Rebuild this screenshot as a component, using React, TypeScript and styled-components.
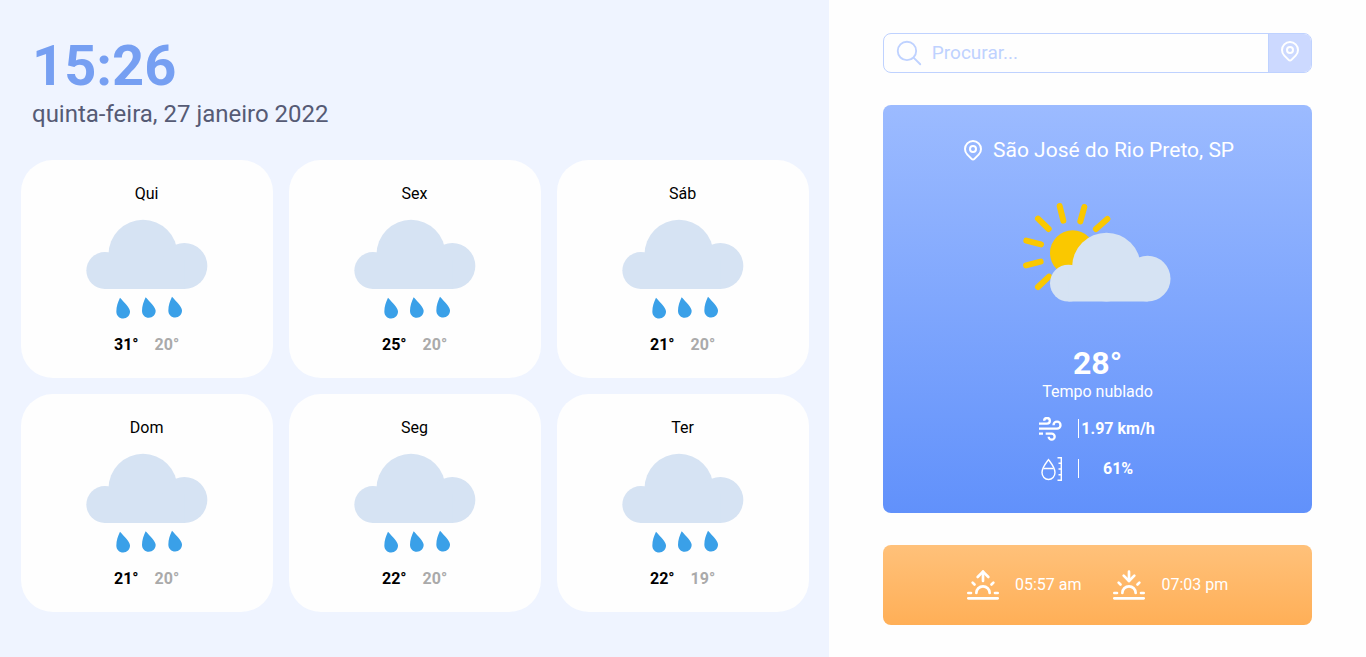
import React from "react";
import styled, { createGlobalStyle } from "styled-components";
import { HiOutlineLocationMarker } from "react-icons/hi";
import { IoSearchOutline } from "react-icons/io5";
import { FiSunrise, FiSunset } from "react-icons/fi";

const GlobalStyle = createGlobalStyle`
  * {
    box-sizing: border-box;
    margin: 0;
    padding: 0;
  }

  body {
    background: #fefefe;
    color: #000;
    font-family: Roboto, sans-serif;
    font-size: 16px;
    line-height: 19px;
  }
`;

const Page = styled.div`
  display: grid;
  grid-template-columns: 607fr 393fr;
  min-height: 100vh;
`;

const Forecast = styled.main`
  display: flex;
  flex-direction: column;
  gap: 32px;
  padding: 32px 16px;
  background: #eff4ff;
`;

const Header = styled.header`
  padding: 0 16px;
`;

const Clock = styled.h1`
  color: #769ff2;
  font-size: 56px;
  font-weight: 700;
  line-height: 68px;
`;

const Today = styled.p`
  color: #565b75;
  font-size: 24px;
  line-height: 28px;
`;

const Days = styled.ul`
  display: grid;
  grid-template-columns: repeat(3, minmax(0, 252px));
  gap: 16px;
  justify-content: center;
  list-style: none;
`;

const DayCard = styled.li`
  display: flex;
  flex-direction: column;
  align-items: center;
  padding: 24px;
  border-radius: 32px;
  background: #fefefe;
`;

const DayName = styled.h2`
  font-size: 16px;
  font-weight: 400;
`;

const Range = styled.div`
  display: flex;
  gap: 16px;
  font-weight: 700;
`;

const Degrees = styled.span<{ $low?: boolean }>`
  color: ${({ $low }) => ($low ? "#aaaaaa" : "#000")};
`;

const Sidebar = styled.aside`
  display: flex;
  flex-direction: column;
  justify-content: center;
  gap: 32px;
  padding: 32px 10%;
  background: #fefefe;
`;

const SearchBar = styled.form`
  display: flex;
  height: 40px;
  overflow: hidden;
  border: 1px solid #bfd2ff;
  border-radius: 8px;
`;

const SearchField = styled.label`
  display: flex;
  flex: 1;
  align-items: center;
  gap: 8px;
  min-width: 0;
  padding-left: 10px;
  color: #bfd2ff;
`;

const SearchInput = styled.input`
  flex: 1;
  min-width: 0;
  height: 36px;
  border: 0;
  outline: 0;
  background: transparent;
  color: #769ff2;
  font: 400 19px Roboto, sans-serif;

  &::placeholder {
    color: #bfd2ff;
    opacity: 1;
  }
`;

const LocateButton = styled.button`
  display: flex;
  align-items: center;
  justify-content: center;
  width: 43px;
  padding-bottom: 4px;
  border: 0;
  border-left: 1px solid #bfd2ff;
  background: #ccd9ff;
  color: #fff;
  cursor: pointer;
`;

const CurrentCard = styled.section`
  display: flex;
  flex-direction: column;
  align-items: center;
  padding: 32px;
  border-radius: 8px;
  background: linear-gradient(180deg, #9cbbff 0%, #6191fb 100%);
  color: #fff;
`;

const City = styled.h2`
  display: flex;
  align-items: center;
  gap: 8px;
  font-size: 21px;
  font-weight: 400;
  line-height: 26px;
`;

const CurrentArt = styled.svg`
  margin: 22px 0 24px;
`;

const CurrentTemp = styled.strong`
  font-size: 32px;
  line-height: 38px;
`;

const Details = styled.ul`
  display: flex;
  flex-direction: column;
  gap: 16px;
  margin-top: 16px;
  list-style: none;
`;

const Detail = styled.li`
  display: flex;
  align-items: center;
  gap: 16px;
`;

const DetailValue = styled.span`
  width: 80px;
  border-left: 1px solid #fff;
  font-weight: 700;
  text-align: center;
`;

const SunCard = styled.section`
  display: flex;
  align-items: center;
  justify-content: center;
  gap: 32px;
  height: 80px;
  border-radius: 8px;
  background: linear-gradient(180deg, #ffc17a 0%, #ffaf57 100%);
  color: #fff;
`;

const SunTime = styled.div`
  display: flex;
  align-items: center;
  gap: 16px;
`;

const Cloud = () => (
  <g fill="#d6e3f3">
    <circle cx="55.5" cy="152" r="55.5" />
    <circle cx="170" cy="103.5" r="103.5" />
    <circle cx="294" cy="138.5" r="69" />
    <path d="M55.5 120H294V207.500H55.500Z" />
  </g>
);

const Drop = ({ x, y }: { x: number; y: number }) => (
  <path
    fill="#3aa0e8"
    transform={`translate(${x} ${y})`}
    d="M11 0C5 13 0 26 0 41C0 54 9 62 20.500 62S41 53 41 41C41 30 24 15 11 0Z"
  />
);

const RainArt = () => (
  <svg width="132" height="132" viewBox="0 0 396 396" aria-hidden="true">
    <g transform="translate(16 50.500)">
      <Cloud />
      <Drop x={90} y={234} />
      <Drop x={167} y={232} />
      <Drop x={246} y={231} />
    </g>
  </svg>
);

const PartlyCloudyArt = () => (
  <CurrentArt width="195" height="135" viewBox="0 -15 585 405" aria-hidden="true">
    <g stroke="#fac800" strokeWidth="18" strokeLinecap="round">
      <path d="M179 48L190 92M253 51L241 94M322 87L288 117M114 86L146 117M79 152L123 163M78 226L122 215M114 291L147 260" />
    </g>
    <circle cx="218" cy="189" r="68" fill="#fac800" />
    <g transform="translate(150 128) scale(.996)">
      <Cloud />
    </g>
  </CurrentArt>
);

const WindIcon = () => (
  <svg
    width="24"
    height="24"
    viewBox="-3 1 72 72"
    fill="none"
    stroke="currentColor"
    strokeWidth="7"
    aria-hidden="true"
  >
    <path d="M0 21H24A8.500 8.500 0 1 0 15.500 12.500" />
    <path d="M0 36H54A10.500 10.500 0 1 0 43.500 25.500" />
    <path d="M0 51H12M20 51H38A9 9 0 1 1 29 60" />
  </svg>
);

const HumidityIcon = () => (
  <svg
    width="24"
    height="24"
    viewBox="0 0 24 24"
    fill="none"
    stroke="currentColor"
    strokeWidth="1.4"
    aria-hidden="true"
  >
    <path d="M10.500 2.600C8 6 4 10.500 4 15.500a6.500 7 0 0 0 13 0C17 10.500 13 6 10.500 2.600Z" />
    <path d="M5.500 11.500h10M19.500 .7h3.800v22.600h-3.800M20.500 6.300h3M20.500 12h3M20.500 17.700h3" />
  </svg>
);

const days = [
  { name: "Qui", high: 31, low: 20 },
  { name: "Sex", high: 25, low: 20 },
  { name: "Sáb", high: 21, low: 20 },
  { name: "Dom", high: 21, low: 20 },
  { name: "Seg", high: 22, low: 20 },
  { name: "Ter", high: 22, low: 19 },
];

export default function App() {
  return (
    <>
      <GlobalStyle />
      <Page>
        <Forecast>
          <Header>
            <Clock>15:26</Clock>
            <Today>quinta-feira, 27 janeiro 2022</Today>
          </Header>
          <Days>
            {days.map((day) => (
              <DayCard key={day.name}>
                <DayName>{day.name}</DayName>
                <RainArt />
                <Range>
                  <Degrees>{day.high}°</Degrees>
                  <Degrees $low>{day.low}°</Degrees>
                </Range>
              </DayCard>
            ))}
          </Days>
        </Forecast>
        <Sidebar>
          <SearchBar onSubmit={(event) => event.preventDefault()}>
            <SearchField>
              <IoSearchOutline size={30} />
              <SearchInput type="text" placeholder="Procurar..." aria-label="Procurar" />
            </SearchField>
            <LocateButton type="button" aria-label="Usar minha localização">
              <HiOutlineLocationMarker size={24} />
            </LocateButton>
          </SearchBar>
          <CurrentCard>
            <City>
              <HiOutlineLocationMarker size={24} />
              São José do Rio Preto, SP
            </City>
            <PartlyCloudyArt />
            <CurrentTemp>28°</CurrentTemp>
            <p>Tempo nublado</p>
            <Details>
              <Detail>
                <WindIcon />
                <DetailValue>1.97 km/h</DetailValue>
              </Detail>
              <Detail>
                <HumidityIcon />
                <DetailValue>61%</DetailValue>
              </Detail>
            </Details>
          </CurrentCard>
          <SunCard>
            <SunTime>
              <FiSunrise size={32} />
              <span>05:57 am</span>
            </SunTime>
            <SunTime>
              <FiSunset size={32} />
              <span>07:03 pm</span>
            </SunTime>
          </SunCard>
        </Sidebar>
      </Page>
    </>
  );
}
